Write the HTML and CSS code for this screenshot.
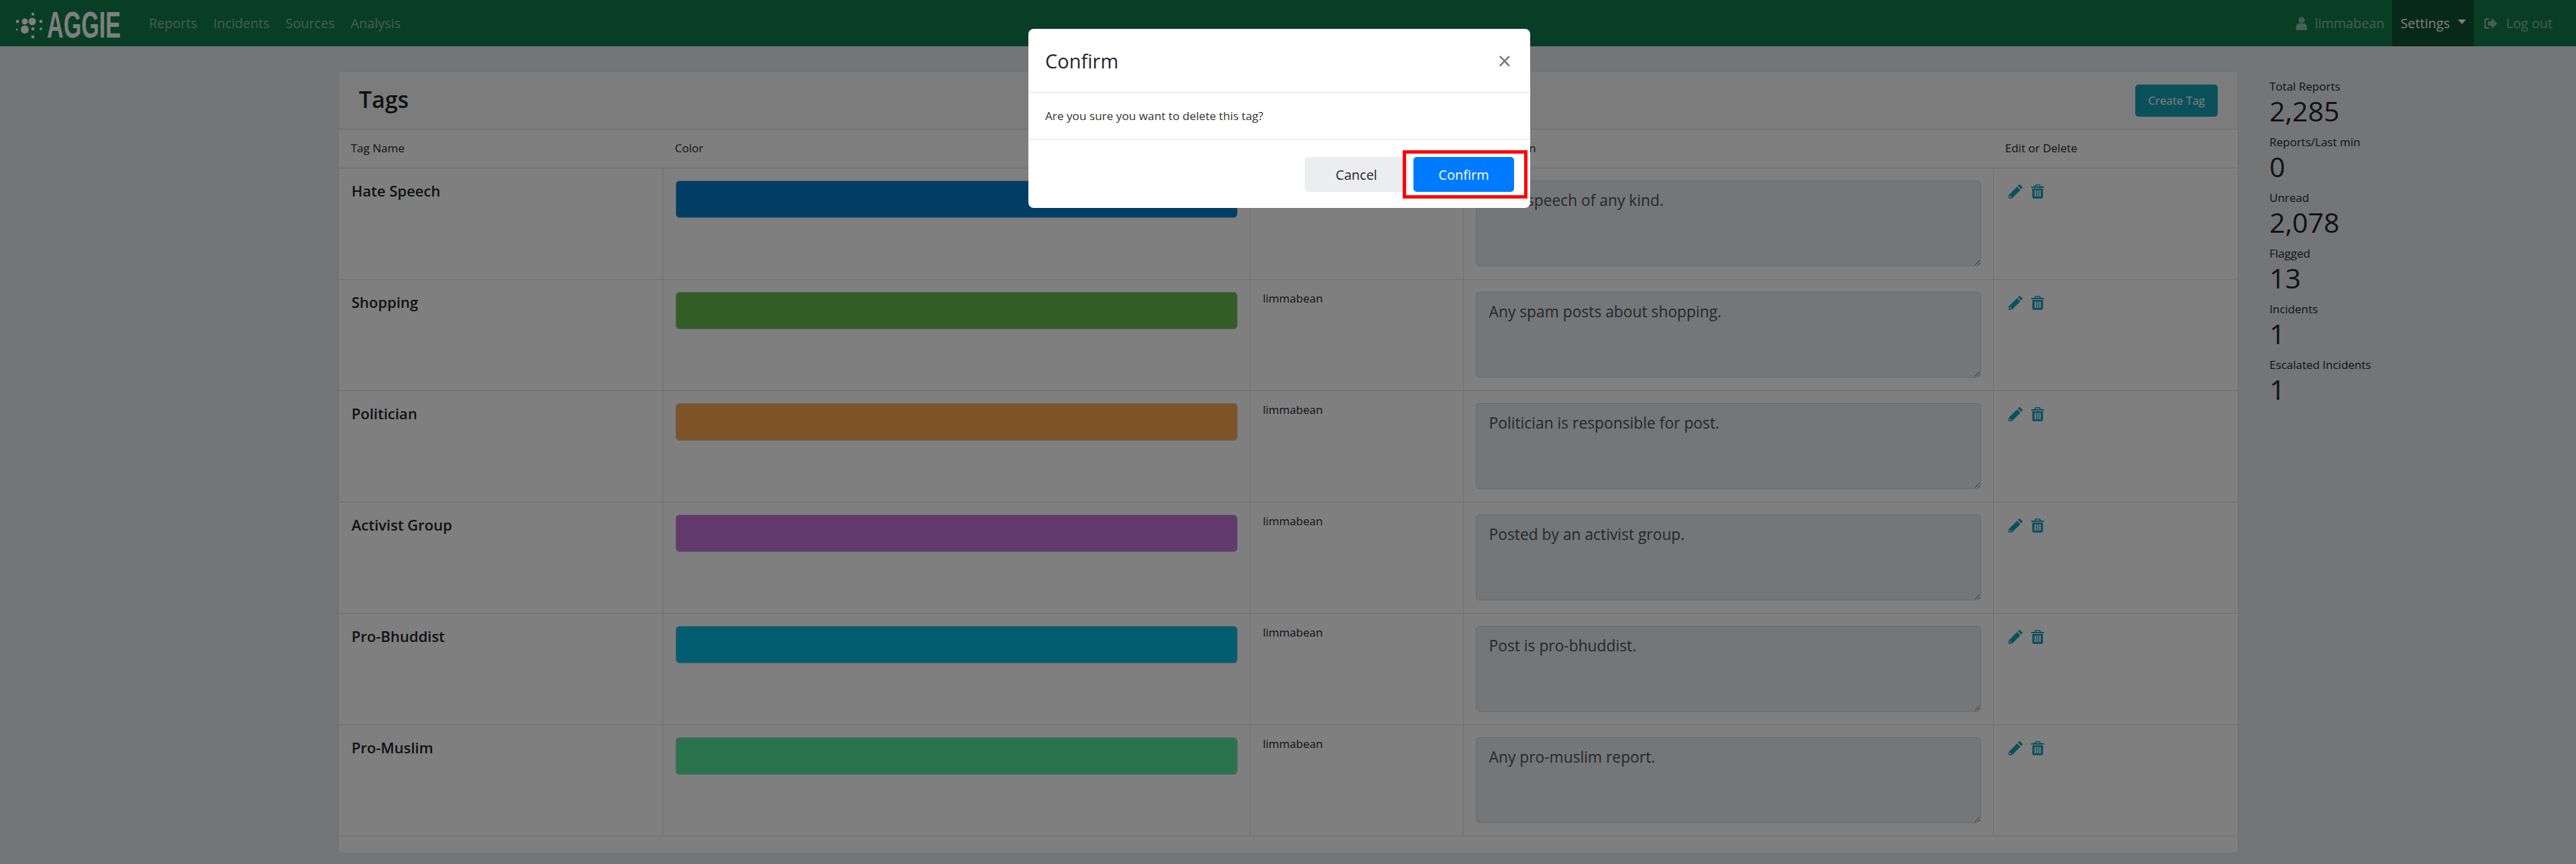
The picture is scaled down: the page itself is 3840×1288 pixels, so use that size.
FILE: index.html
```html
<!DOCTYPE html>
<html lang="en">
<head>
<meta charset="utf-8">
<title>Aggie - Tags</title>
<link rel="stylesheet" href="styles.css">
</head>
<body>

<svg class="defs" width="0" height="0">
  <symbol id="pencil" viewBox="0 0 21 21">
    <path d="M14 2 15.500.5c.6-.6 1.400-.6 2 0l3 3c.6.6.6 1.400 0 2L19 7z"/>
    <path fill-rule="evenodd" d="M12.800 3.200 17.800 8.200 5.500 20.500 0 21 .5 15.500zM2 16.500 1.700 19.300 4.500 19z"/>
  </symbol>
  <symbol id="trash" viewBox="0 0 19 21">
    <path fill-rule="evenodd" d="M6 0h7l1.500 3H19v2H0V3h4.500zM7 1.500 6.500 3h6L12 1.500z"/>
    <path fill-rule="evenodd" d="M1.500 6h16v12.500c0 1.500-1 2.500-2.500 2.500H4c-1.500 0-2.500-1-2.500-2.500zM5 8.500v9.500h2V8.500zM8.500 8.500v9.500h2V8.500zM12 8.500v9.500h2V8.500z"/>
  </symbol>
</svg>

<nav class="navbar">
  <a class="brand" href="#">
    <svg class="brand-logo" width="160" height="69" viewBox="24 0 160 69">
      <circle cx="37" cy="32" r="4.5"/>
      <circle cx="48" cy="32" r="5.5"/>
      <circle cx="37" cy="44" r="6"/>
      <circle cx="49" cy="21" r="2.2"/>
      <circle cx="61" cy="32" r="2.4"/>
      <circle cx="26" cy="32" r="2.4"/>
      <circle cx="25" cy="44" r="1.6"/>
      <circle cx="49" cy="43" r="2.4"/>
      <circle cx="61" cy="43" r="2"/>
      <circle cx="49" cy="55" r="2.4"/>
      <text transform="translate(70 56) scale(.61 1)">AGGIE</text>
    </svg>
  </a>
  <a class="nav-link" href="#">Reports</a>
  <a class="nav-link" href="#">Incidents</a>
  <a class="nav-link" href="#">Sources</a>
  <a class="nav-link" href="#">Analysis</a>
  <div class="nav-right">
    <span class="nav-link">
      <svg class="nav-icon" width="18" height="20" viewBox="0 0 18 20"><circle cx="9" cy="5" r="4.6"/><path d="M0.5 19v-4c0-3 2.5-5 5-5h7c2.500 0 4.500 2 4.500 5v4c0 .6-.5 1-1 1H1.500c-.5 0-1-.4-1-1z"/></svg>
      limmabean
    </span>
    <a class="nav-link nav-active" href="#">Settings<i class="caret"></i></a>
    <a class="nav-link nav-logout" href="#">
      <svg class="nav-icon" width="20" height="18" viewBox="0 0 20 18"><path d="M7 1H3.500C1.600 1 0.500 2.300 0.500 4v10c0 1.700 1.100 3 3 3H7v-2.400H4c-.8 0-1.200-.5-1.200-1.200V4.600c0-.7.4-1.200 1.200-1.200h3z"/><path d="M11.500 0.800 19.500 9l-8 8.200v-4.700H6v-7h5.500z"/></svg>
      Log out
    </a>
  </div>
</nav>

<div class="page">
  <section class="card">
    <header class="card-header">
      <h2>Tags</h2>
      <a class="btn btn-info" href="#">Create Tag</a>
    </header>
    <table class="tags">
      <colgroup>
        <col class="col-name"><col class="col-color"><col class="col-user"><col class="col-desc"><col class="col-act">
      </colgroup>
      <thead>
        <tr><th>Tag Name</th><th>Color</th><th>Creator</th><th>Description</th><th>Edit or Delete</th></tr>
      </thead>
      <tbody>
        <tr>
          <td class="tag-name">Hate Speech</td>
          <td><div class="swatch swatch-blue"></div></td>
          <td class="creator">limmabean</td>
          <td><textarea readonly>Hate speech of any kind.</textarea></td>
          <td class="actions">
            <svg class="icon icon-pencil"><use href="#pencil"/></svg>
            <svg class="icon icon-trash"><use href="#trash"/></svg>
          </td>
        </tr>
        <tr>
          <td class="tag-name">Shopping</td>
          <td><div class="swatch swatch-green"></div></td>
          <td class="creator">limmabean</td>
          <td><textarea readonly>Any spam posts about shopping.</textarea></td>
          <td class="actions">
            <svg class="icon icon-pencil"><use href="#pencil"/></svg>
            <svg class="icon icon-trash"><use href="#trash"/></svg>
          </td>
        </tr>
        <tr>
          <td class="tag-name">Politician</td>
          <td><div class="swatch swatch-orange"></div></td>
          <td class="creator">limmabean</td>
          <td><textarea readonly>Politician is responsible for post.</textarea></td>
          <td class="actions">
            <svg class="icon icon-pencil"><use href="#pencil"/></svg>
            <svg class="icon icon-trash"><use href="#trash"/></svg>
          </td>
        </tr>
        <tr>
          <td class="tag-name">Activist Group</td>
          <td><div class="swatch swatch-purple"></div></td>
          <td class="creator">limmabean</td>
          <td><textarea readonly>Posted by an activist group.</textarea></td>
          <td class="actions">
            <svg class="icon icon-pencil"><use href="#pencil"/></svg>
            <svg class="icon icon-trash"><use href="#trash"/></svg>
          </td>
        </tr>
        <tr>
          <td class="tag-name">Pro-Bhuddist</td>
          <td><div class="swatch swatch-cyan"></div></td>
          <td class="creator">limmabean</td>
          <td><textarea readonly>Post is pro-bhuddist.</textarea></td>
          <td class="actions">
            <svg class="icon icon-pencil"><use href="#pencil"/></svg>
            <svg class="icon icon-trash"><use href="#trash"/></svg>
          </td>
        </tr>
        <tr>
          <td class="tag-name">Pro-Muslim</td>
          <td><div class="swatch swatch-mint"></div></td>
          <td class="creator">limmabean</td>
          <td><textarea readonly>Any pro-muslim report.</textarea></td>
          <td class="actions">
            <svg class="icon icon-pencil"><use href="#pencil"/></svg>
            <svg class="icon icon-trash"><use href="#trash"/></svg>
          </td>
        </tr>
      </tbody>
    </table>
    <div class="card-footer"></div>
  </section>

  <aside class="stats">
    <div class="stat"><span class="stat-label">Total Reports</span><span class="stat-num">2,285</span></div>
    <div class="stat"><span class="stat-label">Reports/Last min</span><span class="stat-num">0</span></div>
    <div class="stat"><span class="stat-label">Unread</span><span class="stat-num">2,078</span></div>
    <div class="stat"><span class="stat-label">Flagged</span><span class="stat-num">13</span></div>
    <div class="stat"><span class="stat-label">Incidents</span><span class="stat-num">1</span></div>
    <div class="stat"><span class="stat-label">Escalated Incidents</span><span class="stat-num">1</span></div>
  </aside>
</div>

<div class="backdrop"></div>

<div class="modal">
  <div class="modal-header">
    <h3>Confirm</h3>
    <span class="close">&times;</span>
  </div>
  <div class="modal-body">Are you sure you want to delete this tag?</div>
  <div class="modal-footer">
    <button class="btn btn-cancel">Cancel</button>
    <button class="btn btn-primary">Confirm</button>
    <span class="red-box"></span>
  </div>
</div>

</body>
</html>
```

FILE: styles.css
```css
* {
  box-sizing: border-box;
}
html, body {
  margin: 0;
  height: 100%;
}
body {
  background: #e9ebee;
  color: #212529;
  font-family: "Open Sans", "Noto Sans", sans-serif;
  font-size: 18px;
  overflow: hidden;
}
.defs {
  display: block;
  height: 0;
}

/* top bar */
.navbar {
  display: flex;
  align-items: center;
  height: 69px;
  padding-left: 24px;
  background: #137c4c;
}
.brand {
  display: flex;
  margin-right: 26px;
}
.brand-logo {
  fill: #fff;
}
.brand-logo text {
  font-family: "Liberation Sans", sans-serif;
  font-size: 56px;
  font-weight: 700;
}
.nav-link {
  display: flex;
  align-items: center;
  height: 69px;
  padding: 0 12px;
  color: rgba(255, 255, 255, .5);
  text-decoration: none;
  font-size: 19.8px;
}
.nav-right {
  display: flex;
  margin-left: auto;
  padding-right: 23px;
}
.nav-icon {
  fill: currentColor;
  margin-right: 11px;
}
.nav-active {
  background: #0e5234;
  color: #fff;
}
.nav-logout {
  padding-left: 15px;
}
.nav-logout .nav-icon {
  margin-right: 13px;
}
.caret {
  width: 0;
  height: 0;
  margin-left: 12px;
  margin-bottom: 5px;
  border-top: 7px solid #fff;
  border-left: 6px solid transparent;
  border-right: 6px solid transparent;
}

/* main area */
.page {
  display: flex;
  padding: 37px 0 0 504px;
}
.card {
  width: 2833px;
  height: 1166px;
  background: #fff;
  border: 1px solid #dfdfdf;
  border-radius: 6px;
  overflow: hidden;
}
.card-header {
  display: flex;
  align-items: center;
  justify-content: space-between;
  height: 86px;
  padding: 0 30px;
  background: #f8f8f8;
  border-bottom: 1px solid #d8d8d8;
}
.card-header h2 {
  margin: -3px 0 0;
  font-size: 34px;
  font-weight: 600;
}
.btn {
  display: inline-flex;
  align-items: center;
  justify-content: center;
  border: 0;
  border-radius: 5px;
  font-family: inherit;
  text-decoration: none;
}
.btn-info {
  width: 123px;
  height: 48px;
  background: #17a2b8;
  color: #fff;
  font-size: 17px;
}

/* tags table */
.tags {
  width: 2831px;
  table-layout: fixed;
  border-collapse: collapse;
}
.col-name { width: 483px; }
.col-color { width: 875px; }
.col-user { width: 318px; }
.col-desc { width: 790px; }
.col-act { width: 365px; }
.tags th {
  height: 57px;
  padding: 0 18px 2px;
  border-bottom: 1px solid #d8d8d8;
  text-align: left;
  font-size: 17px;
  font-weight: 400;
}
.tags td {
  height: 166px;
  padding: 18px 18px 0;
  border: 1px solid #dedede;
  vertical-align: top;
  font-size: 17px;
}
.tags tr td:first-child {
  border-left: 0;
}
.tags tr td:last-child {
  border-right: 0;
}
.tags td.tag-name {
  padding: 18px 18px 0 19px;
  font-size: 22px;
  font-weight: 600;
}
.tags td.creator {
  line-height: 1.2;
  padding-left: 19px;
}
.swatch {
  height: 56px;
  border: 1px solid #ccc;
  border-radius: 6px;
}
.swatch-blue { background: #007ccc; }
.swatch-green { background: #66be4e; }
.swatch-orange { background: #fca84e; }
.swatch-purple { background: #c474dc; }
.swatch-cyan { background: #00bce0; }
.swatch-mint { background: #54e89a; }
.tags textarea {
  display: block;
  width: 100%;
  height: 128px;
  padding: 13px 19px;
  background: #e9ecef;
  border: 1px solid #ced4da;
  border-radius: 6px;
  color: #495057;
  font-family: inherit;
  font-size: 22.8px;
  resize: vertical;
}
.tags td.actions {
  padding: 24px 0 0 22px;
}
.icon {
  fill: #17a2b8;
  height: 21px;
}
.icon-pencil {
  width: 21px;
  margin-right: 9px;
}
.icon-trash {
  width: 19px;
}
.card-footer {
  height: 26px;
  background: #fff;
}

/* right column */
.stats {
  margin-left: 46px;
  padding-top: 10px;
}
.stat {
  display: flex;
  flex-direction: column;
  height: 83px;
}
.stat-label {
  height: 25px;
  line-height: 26px;
  font-size: 17px;
}
.stat-num {
  line-height: 48px;
  font-size: 41px;
}

/* dialog */
.backdrop {
  position: fixed;
  inset: 0;
  background: rgba(0, 0, 0, .5);
}
.modal {
  position: fixed;
  left: 1533px;
  top: 43px;
  width: 748px;
  height: 267px;
  background: #fff;
  border-radius: 8px;
}
.modal-header {
  display: flex;
  align-items: center;
  justify-content: space-between;
  height: 95px;
  padding: 0 28px 0 25px;
  border-bottom: 1px solid #dee2e6;
}
.modal-header h3 {
  margin: 0;
  font-size: 29px;
  font-weight: 500;
}
.close {
  color: #777;
  font-size: 36px;
  font-weight: 400;
}
.modal-body {
  display: flex;
  align-items: center;
  height: 70px;
  padding: 0 25px;
  border-bottom: 1px solid #dee2e6;
  color: #333;
  font-size: 17.2px;
}
.modal-footer {
  position: relative;
  display: flex;
  justify-content: flex-end;
  gap: 8px;
  padding: 26px 24px 0 0;
}
.modal-footer .btn {
  height: 52px;
  font-size: 20px;
}
.btn-cancel {
  width: 154px;
  background: #ebedef;
  color: #212529;
}
.btn-primary {
  width: 150px;
  background: #007bff;
  color: #fff;
}
.red-box {
  position: absolute;
  left: 558px;
  top: 16px;
  width: 186px;
  height: 72px;
  border: 5px solid #f00;
}
```
